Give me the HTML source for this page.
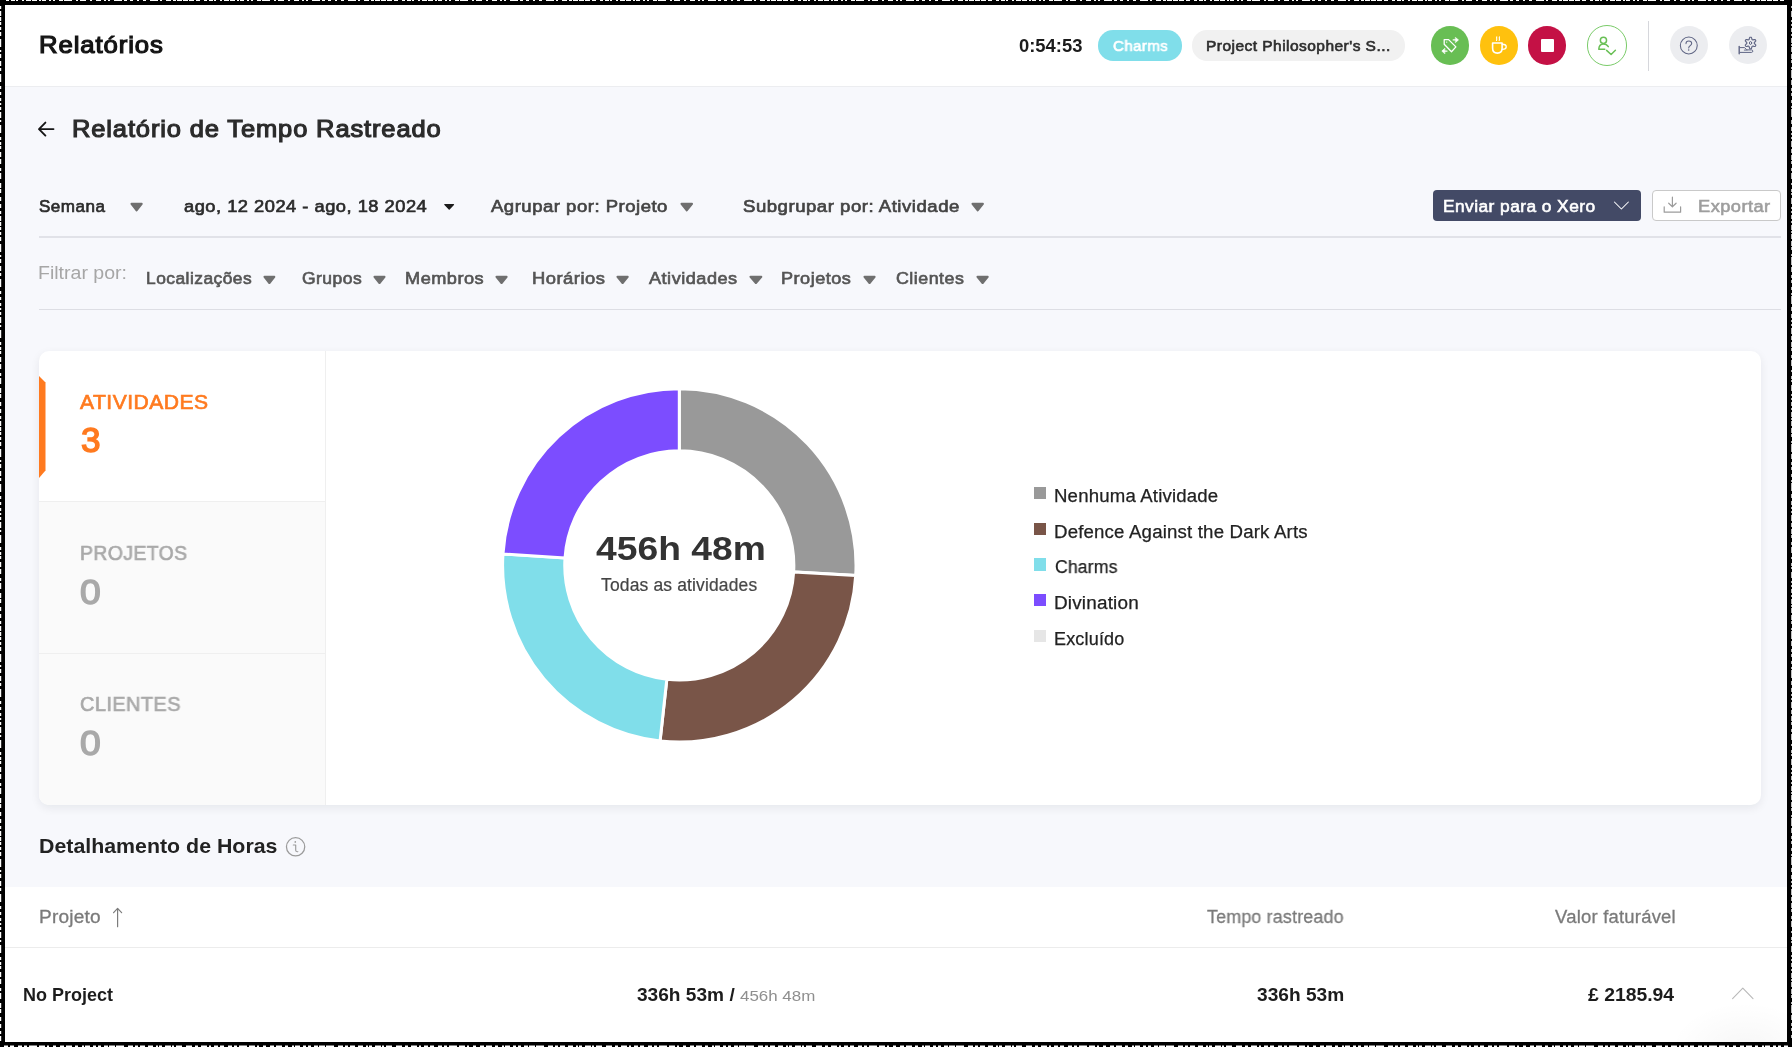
<!DOCTYPE html>
<html lang="pt"><head><meta charset="utf-8"><title>Relatórios</title>
<style>
header,main,section,nav{display:block;position:static;margin:0;padding:0;}
html,body{margin:0;padding:0;background:#000;}
body{width:1792px;height:1047px;position:relative;overflow:hidden;font-family:"Liberation Sans",sans-serif;}
#app{position:absolute;left:0;top:0;width:1792px;height:1047px;background:#F7F8FC;overflow:hidden;}
.a{position:absolute;display:block;}
.t{position:absolute;white-space:nowrap;font-family:"Liberation Sans",sans-serif;transform-origin:0 50%;will-change:transform;}
.fr{position:absolute;background:#000;z-index:50;}
</style></head><body><div id="app">

<header>
<div class="a" style="left:0;top:0;width:1792px;height:85.7px;background:#fff;border-bottom:1.5px solid #ECEDF0"></div>
<div class="a" style="left:1098px;top:30.4px;width:84.3px;height:30.2px;border-radius:15.1px;background:#80DEEA"></div>
<div class="a" style="left:1192.2px;top:30.4px;width:212.8px;height:30.2px;border-radius:15.1px;background:#F1F1F1"></div>
<div class="a" style="left:1430.6px;top:26.1px;width:38.5px;height:38.7px;border-radius:50%;background:#68BE54"></div>
<div class="a" style="left:1479.5px;top:26.1px;width:38.5px;height:38.7px;border-radius:50%;background:#FFC10E"></div>
<div class="a" style="left:1527.7px;top:26.1px;width:38.5px;height:38.7px;border-radius:50%;background:#C41145"></div>
<div class="a" style="left:1540.6px;top:39.1px;width:13px;height:12.8px;background:#fff;border-radius:1px"></div>
<div class="a" style="left:1586.5px;top:24.9px;width:38.8px;height:38.8px;border-radius:50%;border:1px solid #7ACB69;background:#fff"></div>
<div class="a" style="left:1648px;top:20.5px;width:1px;height:50.5px;background:#D6D7DC"></div>
<div class="a" style="left:1669.8px;top:26.2px;width:38.3px;height:38.3px;border-radius:50%;background:#ECEDF0"></div>
<div class="a" style="left:1728.8px;top:26.2px;width:38.3px;height:38.3px;border-radius:50%;background:#ECEDF0"></div>
<svg class="a" style="left:1430px;top:26px" width="40" height="40" viewBox="0 0 40 40" fill="none" stroke="#fff" stroke-width="1.3" stroke-linejoin="round" stroke-linecap="round">
<path d="M14.2 13.6 L18.6 13.6 L25.9 20.9 L21.5 25.7 L14.2 18.2 Z"/><circle cx="16.7" cy="16.1" r="0.7" fill="#fff" stroke="none"/>
<path d="M23.2 13.9 H27"/><path d="M25.6 11.6 L28.5 13.9 L25.6 16.5 Z" fill="#fff" stroke-width="0.6"/>
<path d="M17 25.1 H13.2"/><path d="M14.6 22.5 L11.8 25.1 L14.6 27.6 Z" fill="#fff" stroke-width="0.6"/></svg>
<svg class="a" style="left:1479px;top:26px" width="40" height="40" viewBox="0 0 40 40" fill="none" stroke="#fff" stroke-width="1.6" stroke-linejoin="round" stroke-linecap="round">
<path d="M13.6 17 H23.1 V22 C23.1 25.4 21 27.1 18.35 27.1 C15.7 27.1 13.6 25.4 13.6 22 Z"/>
<path d="M23.3 18.3 A3.9 2.55 0 0 1 23.3 23.4" stroke-width="1.4"/>
<path d="M17.8 10.9 c-0.7 1.1 0.5 2.3 -0.3 3.6 M20.5 10.9 c-0.7 1.1 0.5 2.3 -0.3 3.6" stroke-width="1.1"/></svg>
<svg class="a" style="left:1586px;top:24px" width="42" height="42" viewBox="0 0 42 42" fill="none" stroke="#69BF55" stroke-width="1.5" stroke-linejoin="round" stroke-linecap="round">
<circle cx="17.45" cy="16.3" r="3.1"/>
<path d="M22.3 22.6 C21.2 20.9 19.5 19.9 17.45 19.9 C14.6 19.9 12.9 22 12.8 25.2 H18.8"/>
<path d="M20.6 26.4 L25.1 30.5 L29.4 26.3"/></svg>
<svg class="a" style="left:1668px;top:24px" width="42" height="42" viewBox="0 0 42 42" fill="none" stroke="#5F6584" stroke-width="1.05" stroke-linecap="round" stroke-linejoin="round">
<circle cx="20.8" cy="21.5" r="8.45"/>
<path d="M18 19.6 C18 17.9 19.2 16.9 20.8 16.9 C22.5 16.9 23.7 17.9 23.7 19.4 C23.7 21.4 20.7 21.9 20.7 23.9"/><circle cx="20.7" cy="25.9" r="0.75" fill="#5A6080" stroke="none"/></svg>
<svg class="a" style="left:1727px;top:24px" width="42" height="42" viewBox="0 0 42 42" fill="none" stroke="#5F6584" stroke-width="1.0" stroke-linecap="round" stroke-linejoin="round">
<path d="M23.55 13.25 L24.30 13.30 L24.78 14.41 L24.99 15.54 L25.43 15.75 L25.83 16.02 L26.91 15.64 L28.11 15.50 L28.53 16.12 L28.86 16.80 L28.14 17.77 L27.27 18.51 L27.30 19.00 L27.27 19.49 L28.14 20.23 L28.86 21.20 L28.53 21.88 L28.11 22.50 L26.91 22.36 L25.83 21.98 L25.43 22.25 L24.99 22.46 L24.78 23.59 L24.30 24.70 L23.55 24.75 L22.80 24.70 L22.32 23.59 L22.11 22.46 L21.68 22.25 L21.27 21.98 L20.19 22.36 L18.99 22.50 L18.57 21.88 L18.24 21.20 L18.96 20.23 L19.83 19.49 L19.80 19.00 L19.83 18.51 L18.96 17.77 L18.24 16.80 L18.57 16.12 L18.99 15.50 L20.19 15.64 L21.27 16.02 L21.67 15.75 L22.11 15.54 L22.32 14.41 L22.80 13.30 Z" stroke-width="1.1" fill="#ECEDF0"/>
<ellipse cx="23.55" cy="19.0" rx="1.1" ry="1.5"/>
<path d="M12.2 22.4 V29.8" stroke-width="1.4"/>
<path d="M12.9 23.6 H17.6 L19.7 25.9 H24.6 C26.2 25.9 26.2 28.4 24.6 28.4 H12.9"/><path d="M17.3 26.1 H20" stroke-width="0.9"/></svg>
<div class="t" style="left:38.82px;top:31.00px;font-size:23.8px;line-height:27px;font-weight:400;color:#141414;letter-spacing:0.840px;transform:scaleX(1.0799);-webkit-text-stroke:1.2px #141414;">Relatórios</div>
<div class="t" style="left:1018.80px;top:35.00px;font-size:18.4px;line-height:21px;font-weight:700;color:#1c1c1c;letter-spacing:-0.000px;transform:scaleX(1.0006);">0:54:53</div>
<div class="t" style="left:1112.83px;top:37.00px;font-size:15.5px;line-height:17px;font-weight:400;color:#ffffff;letter-spacing:0.455px;transform:scaleX(0.9680);-webkit-text-stroke:0.65px #ffffff;">Charms</div>
<div class="t" style="left:1206.02px;top:37.00px;font-size:15.5px;line-height:17px;font-weight:400;color:#2e2e2e;letter-spacing:0.455px;transform:scaleX(1.0012);-webkit-text-stroke:0.65px #2e2e2e;">Project Philosopher's S...</div>
</header>
<main>
<section class="titlebar">
<svg class="a" style="left:36px;top:119px" width="22" height="20" viewBox="0 0 22 20" fill="none" stroke="#161616" stroke-width="1.9" stroke-linecap="round" stroke-linejoin="round"><path d="M17.5 10.1 H3.2 M9.4 3.6 L3 10.1 L9.4 16.6"/></svg>
<div class="t" style="left:71.60px;top:115.00px;font-size:23.8px;line-height:27px;font-weight:400;color:#2b2b2b;letter-spacing:0.805px;transform:scaleX(1.0715);-webkit-text-stroke:1.15px #2b2b2b;">Relatório de Tempo Rastreado</div>
</section>
<section class="toolbar">
<svg class="a" style="left:129.30px;top:201.70px" width="15.20" height="10.20" viewBox="-1 -1 15.20 10.20"><path d="M1.5 0.8999999999999999 L11.699999999999989 0.8999999999999999 L6.599999999999994 7.450000000000017 Z" fill="#6f6f6f" stroke="#6f6f6f" stroke-width="2.0999999999999996" stroke-linejoin="round"/></svg>
<svg class="a" style="left:442.50px;top:202.90px" width="12.40" height="7.60" viewBox="-1 -1 12.40 7.60"><path d="M0.9 0.54 L9.499999999999977 0.54 L5.199999999999989 5.149999999999994 Z" fill="#1c1c1c" stroke="#1c1c1c" stroke-width="1.26" stroke-linejoin="round"/></svg>
<svg class="a" style="left:678.60px;top:201.70px" width="15.50" height="10.20" viewBox="-1 -1 15.50 10.20"><path d="M1.5 0.8999999999999999 L12.0 0.8999999999999999 L6.75 7.450000000000017 Z" fill="#6f6f6f" stroke="#6f6f6f" stroke-width="2.0999999999999996" stroke-linejoin="round"/></svg>
<svg class="a" style="left:970.00px;top:201.70px" width="15.40" height="10.20" viewBox="-1 -1 15.40 10.20"><path d="M1.5 0.8999999999999999 L11.899999999999977 0.8999999999999999 L6.699999999999989 7.450000000000017 Z" fill="#6f6f6f" stroke="#6f6f6f" stroke-width="2.0999999999999996" stroke-linejoin="round"/></svg>
<div class="a" style="left:39px;top:236px;width:1742px;height:2px;background:#E1E2E8"></div>
<div class="a" style="left:1433px;top:190px;width:208.3px;height:31px;border-radius:4px;background:#434A66"></div>
<svg class="a" style="left:1612px;top:199px" width="20" height="14" viewBox="0 0 20 14" fill="none" stroke="#fff" stroke-width="1.05" stroke-linecap="round" stroke-linejoin="round"><path d="M2.4 3 L9.4 10 L16.4 3"/></svg>
<div class="a" style="left:1652px;top:190px;width:127px;height:29px;border-radius:4px;background:#fff;border:1px solid #C9C9C9"></div>
<svg class="a" style="left:1662px;top:195px" width="22" height="20" viewBox="0 0 22 20" fill="none" stroke="#9c9c9c" stroke-width="1.2" stroke-linecap="round" stroke-linejoin="round"><path d="M10.4 2.2 V11.6 M6.7 8.2 L10.4 11.8 L14.1 8.2 M2.2 11.8 V17.2 H18.6 V11.8"/></svg>
<div class="t" style="left:39.33px;top:197.00px;font-size:16.6px;line-height:19px;font-weight:400;color:#2b2b2b;letter-spacing:0.455px;transform:scaleX(1.0280);-webkit-text-stroke:0.65px #2b2b2b;">Semana</div>
<div class="t" style="left:183.52px;top:197.00px;font-size:16.6px;line-height:19px;font-weight:400;color:#2b2b2b;letter-spacing:0.455px;transform:scaleX(1.1015);-webkit-text-stroke:0.65px #2b2b2b;">ago, 12 2024 - ago, 18 2024</div>
<div class="t" style="left:491.22px;top:197.00px;font-size:16.6px;line-height:19px;font-weight:400;color:#444;letter-spacing:0.455px;transform:scaleX(1.1161);-webkit-text-stroke:0.65px #444;">Agrupar por: Projeto</div>
<div class="t" style="left:742.93px;top:197.00px;font-size:16.6px;line-height:19px;font-weight:400;color:#444;letter-spacing:0.455px;transform:scaleX(1.1202);-webkit-text-stroke:0.65px #444;">Subgrupar por: Atividade</div>
<div class="t" style="left:1443.08px;top:197.00px;font-size:17px;line-height:19px;font-weight:400;color:#ffffff;letter-spacing:0.420px;transform:scaleX(1.0215);-webkit-text-stroke:0.6px #ffffff;">Enviar para o Xero</div>
<div class="t" style="left:1697.83px;top:197.00px;font-size:17px;line-height:19px;font-weight:400;color:#9e9e9e;letter-spacing:0.420px;transform:scaleX(1.0747);-webkit-text-stroke:0.6px #9e9e9e;">Exportar</div>
</section>
<nav class="filters">
<svg class="a" style="left:262.30px;top:274.50px" width="14.80" height="9.90" viewBox="-1 -1 14.80 9.90"><path d="M1.5 0.8999999999999999 L11.300000000000011 0.8999999999999999 L6.400000000000006 7.149999999999977 Z" fill="#6f6f6f" stroke="#6f6f6f" stroke-width="2.0999999999999996" stroke-linejoin="round"/></svg>
<svg class="a" style="left:372.00px;top:274.50px" width="15.00" height="9.90" viewBox="-1 -1 15.00 9.90"><path d="M1.5 0.8999999999999999 L11.5 0.8999999999999999 L6.5 7.149999999999977 Z" fill="#6f6f6f" stroke="#6f6f6f" stroke-width="2.0999999999999996" stroke-linejoin="round"/></svg>
<svg class="a" style="left:494.20px;top:274.50px" width="15.10" height="9.90" viewBox="-1 -1 15.10 9.90"><path d="M1.5 0.8999999999999999 L11.600000000000023 0.8999999999999999 L6.550000000000011 7.149999999999977 Z" fill="#6f6f6f" stroke="#6f6f6f" stroke-width="2.0999999999999996" stroke-linejoin="round"/></svg>
<svg class="a" style="left:615.40px;top:274.50px" width="15.20" height="9.90" viewBox="-1 -1 15.20 9.90"><path d="M1.5 0.8999999999999999 L11.700000000000045 0.8999999999999999 L6.600000000000023 7.149999999999977 Z" fill="#6f6f6f" stroke="#6f6f6f" stroke-width="2.0999999999999996" stroke-linejoin="round"/></svg>
<svg class="a" style="left:748.30px;top:274.50px" width="15.80" height="9.90" viewBox="-1 -1 15.80 9.90"><path d="M1.5 0.8999999999999999 L12.300000000000068 0.8999999999999999 L6.900000000000034 7.149999999999977 Z" fill="#6f6f6f" stroke="#6f6f6f" stroke-width="2.0999999999999996" stroke-linejoin="round"/></svg>
<svg class="a" style="left:861.90px;top:274.50px" width="15.10" height="9.90" viewBox="-1 -1 15.10 9.90"><path d="M1.5 0.8999999999999999 L11.600000000000023 0.8999999999999999 L6.550000000000011 7.149999999999977 Z" fill="#6f6f6f" stroke="#6f6f6f" stroke-width="2.0999999999999996" stroke-linejoin="round"/></svg>
<svg class="a" style="left:974.50px;top:274.50px" width="15.20" height="9.90" viewBox="-1 -1 15.20 9.90"><path d="M1.5 0.8999999999999999 L11.700000000000045 0.8999999999999999 L6.600000000000023 7.149999999999977 Z" fill="#6f6f6f" stroke="#6f6f6f" stroke-width="2.0999999999999996" stroke-linejoin="round"/></svg>
<div class="a" style="left:39px;top:308.6px;width:1742px;height:1.5px;background:#DDDEE4"></div>
<div class="t" style="left:38.43px;top:262.00px;font-size:18.3px;line-height:21px;font-weight:400;color:#a6a6a6;letter-spacing:0.000px;transform:scaleX(1.0687);">Filtrar por:</div>
<div class="t" style="left:146.28px;top:269.00px;font-size:16.6px;line-height:19px;font-weight:400;color:#555;letter-spacing:0.455px;transform:scaleX(1.0465);-webkit-text-stroke:0.65px #555;">Localizações</div>
<div class="t" style="left:301.62px;top:269.00px;font-size:16.6px;line-height:19px;font-weight:400;color:#555;letter-spacing:0.455px;transform:scaleX(1.0527);-webkit-text-stroke:0.65px #555;">Grupos</div>
<div class="t" style="left:404.83px;top:269.00px;font-size:16.6px;line-height:19px;font-weight:400;color:#555;letter-spacing:0.455px;transform:scaleX(1.0947);-webkit-text-stroke:0.65px #555;">Membros</div>
<div class="t" style="left:531.52px;top:269.00px;font-size:16.6px;line-height:19px;font-weight:400;color:#555;letter-spacing:0.455px;transform:scaleX(1.1063);-webkit-text-stroke:0.65px #555;">Horários</div>
<div class="t" style="left:649.23px;top:269.00px;font-size:16.6px;line-height:19px;font-weight:400;color:#555;letter-spacing:0.455px;transform:scaleX(1.0923);-webkit-text-stroke:0.65px #555;">Atividades</div>
<div class="t" style="left:781.03px;top:269.00px;font-size:16.6px;line-height:19px;font-weight:400;color:#555;letter-spacing:0.455px;transform:scaleX(1.0910);-webkit-text-stroke:0.65px #555;">Projetos</div>
<div class="t" style="left:895.73px;top:269.00px;font-size:16.6px;line-height:19px;font-weight:400;color:#555;letter-spacing:0.455px;transform:scaleX(1.0737);-webkit-text-stroke:0.65px #555;">Clientes</div>
</nav>
<section class="summary">
<div class="a" style="left:39px;top:351px;width:1721.6px;height:453.6px;border-radius:10px;background:#fff;box-shadow:0 3px 10px rgba(20,25,45,0.075);overflow:hidden"><div class="a" style="left:0;top:150px;width:286px;height:304px;background:#FAFAFA"></div><div class="a" style="left:0;top:150px;width:286px;height:1px;background:#EFEFEF"></div><div class="a" style="left:0;top:302px;width:286px;height:1px;background:#EFEFEF"></div><div class="a" style="left:286px;top:0;width:1px;height:454px;background:#EFEFEF"></div><svg class="a" style="left:0;top:24.5px" width="7" height="102" viewBox="0 0 7 102"><path d="M0 0 L6.5 6.5 V94.5 L0 102 Z" fill="#FF7A1F"/></svg></div>
<svg class="a" style="left:0;top:0" width="1792" height="1047" viewBox="0 0 1792 1047"><path d="M679.30 388.70 A176.7 176.7 0 0 1 855.72 575.42 L793.67 571.89 A114.55 114.55 0 0 0 679.30 450.85 Z" fill="#999999" stroke="#fff" stroke-width="3" stroke-linejoin="miter"/><path d="M855.72 575.42 A176.7 176.7 0 0 1 660.06 741.05 L666.83 679.27 A114.55 114.55 0 0 0 793.67 571.89 Z" fill="#795548" stroke="#fff" stroke-width="3" stroke-linejoin="miter"/><path d="M660.06 741.05 A176.7 176.7 0 0 1 502.97 554.00 L564.99 558.01 A114.55 114.55 0 0 0 666.83 679.27 Z" fill="#80DEEA" stroke="#fff" stroke-width="3" stroke-linejoin="miter"/><path d="M502.97 554.00 A176.7 176.7 0 0 1 679.30 388.70 L679.30 450.85 A114.55 114.55 0 0 0 564.99 558.01 Z" fill="#7C4DFF" stroke="#fff" stroke-width="3" stroke-linejoin="miter"/></svg>
<div class="a" style="left:1033.6px;top:486.8px;width:12.4px;height:12.2px;background:#999999"></div>
<div class="a" style="left:1033.6px;top:522.8px;width:12.4px;height:12.2px;background:#795548"></div>
<div class="a" style="left:1033.6px;top:558.4px;width:12.4px;height:12.2px;background:#80DEEA"></div>
<div class="a" style="left:1033.6px;top:594.2px;width:12.4px;height:12.2px;background:#7C4DFF"></div>
<div class="a" style="left:1033.6px;top:630.1px;width:12.4px;height:12.2px;background:#E6E6E6"></div>
<div class="t" style="left:80.12px;top:391.00px;font-size:20px;line-height:22px;font-weight:400;color:#FF7A1F;letter-spacing:0.455px;transform:scaleX(1.0543);-webkit-text-stroke:0.65px #FF7A1F;">ATIVIDADES</div>
<div class="t" style="left:80.95px;top:420.00px;font-size:35px;line-height:39px;font-weight:400;color:#FF7A1F;letter-spacing:0.000px;transform:scaleX(1.0027);-webkit-text-stroke:1.5px #FF7A1F;">3</div>
<div class="t" style="left:79.76px;top:542.00px;font-size:20px;line-height:22px;font-weight:400;color:#A9A9A9;letter-spacing:0.455px;transform:scaleX(0.9679);-webkit-text-stroke:0.65px #A9A9A9;">PROJETOS</div>
<div class="t" style="left:80.09px;top:572.00px;font-size:35px;line-height:39px;font-weight:400;color:#A9A9A9;letter-spacing:0.000px;transform:scaleX(1.0637);-webkit-text-stroke:1.5px #A9A9A9;">0</div>
<div class="t" style="left:79.73px;top:693.00px;font-size:20px;line-height:22px;font-weight:400;color:#A9A9A9;letter-spacing:0.455px;transform:scaleX(0.9942);-webkit-text-stroke:0.65px #A9A9A9;">CLIENTES</div>
<div class="t" style="left:80.09px;top:723.00px;font-size:35px;line-height:39px;font-weight:400;color:#A9A9A9;letter-spacing:0.000px;transform:scaleX(1.0637);-webkit-text-stroke:1.5px #A9A9A9;">0</div>
<div class="t" style="left:595.50px;top:529.00px;font-size:33.8px;line-height:38px;font-weight:700;color:#333;letter-spacing:-0.000px;transform:scaleX(1.1018);">456h 48m</div>
<div class="t" style="left:601.10px;top:575.00px;font-size:17.5px;line-height:20px;font-weight:400;color:#444;letter-spacing:0.140px;transform:scaleX(0.9994);-webkit-text-stroke:0.2px #444;">Todas as atividades</div>
<div class="t" style="left:1053.99px;top:486.00px;font-size:18px;line-height:20px;font-weight:400;color:#222;letter-spacing:0.175px;transform:scaleX(1.0334);-webkit-text-stroke:0.25px #222;">Nenhuma Atividade</div>
<div class="t" style="left:1053.99px;top:522.00px;font-size:18px;line-height:20px;font-weight:400;color:#222;letter-spacing:0.175px;transform:scaleX(1.0350);-webkit-text-stroke:0.25px #222;">Defence Against the Dark Arts</div>
<div class="t" style="left:1055.03px;top:557.00px;font-size:18px;line-height:20px;font-weight:400;color:#222;letter-spacing:0.175px;transform:scaleX(0.9763);-webkit-text-stroke:0.25px #222;">Charms</div>
<div class="t" style="left:1053.97px;top:593.00px;font-size:18px;line-height:20px;font-weight:400;color:#222;letter-spacing:0.175px;transform:scaleX(1.0504);-webkit-text-stroke:0.25px #222;">Divination</div>
<div class="t" style="left:1054.03px;top:629.00px;font-size:18px;line-height:20px;font-weight:400;color:#222;letter-spacing:0.175px;transform:scaleX(0.9930);-webkit-text-stroke:0.25px #222;">Excluído</div>
</section>
<section class="details">
<svg class="a" style="left:284px;top:834.6px" width="24" height="24" viewBox="0 0 24 24" fill="none" stroke="#9b9b9b" stroke-width="1.25" stroke-linecap="round" stroke-linejoin="round"><circle cx="11.6" cy="11.8" r="9.15"/><path d="M9.3 10 H11.7 V15 C11.7 16.3 12.4 16.9 13.8 16.7" stroke-width="1.15"/><circle cx="11.3" cy="6.9" r="0.85" fill="#9b9b9b" stroke="none"/></svg>
<div class="a" style="left:0;top:886.7px;width:1792px;height:170px;background:#fff"></div>
<div class="a" style="left:0;top:947px;width:1792px;height:1px;background:#ECECEC"></div>
<div class="a" style="left:1640px;top:990px;width:160px;height:60px;background:radial-gradient(ellipse 75px 50px at 105px 62px, rgba(0,0,0,0.035), rgba(0,0,0,0) 100%)"></div>
<svg class="a" style="left:108px;top:904px" width="20" height="26" viewBox="0 0 20 26" fill="none" stroke="#7c7c7c" stroke-width="1.2" stroke-linecap="round" stroke-linejoin="round"><path d="M9.6 22.7 V4.6 M5.6 8.7 L9.6 4.4 L13.6 8.7"/></svg>
<svg class="a" style="left:1730px;top:984px" width="26" height="18" viewBox="0 0 26 18" fill="none" stroke="#b9b9b9" stroke-width="1.1" stroke-linecap="round" stroke-linejoin="round"><path d="M2.6 14.6 L12.8 4.2 L23 14.6"/></svg>
<div class="t" style="left:39.16px;top:834.00px;font-size:20.5px;line-height:23px;font-weight:700;color:#222;letter-spacing:-0.000px;transform:scaleX(1.0414);">Detalhamento de Horas</div>
<div class="t" style="left:38.79px;top:907.00px;font-size:18px;line-height:20px;font-weight:400;color:#7a7a7a;letter-spacing:0.210px;transform:scaleX(1.0585);-webkit-text-stroke:0.3px #7a7a7a;">Projeto</div>
<div class="t" style="left:1206.75px;top:907.00px;font-size:18px;line-height:20px;font-weight:400;color:#7a7a7a;letter-spacing:0.210px;transform:scaleX(0.9894);-webkit-text-stroke:0.3px #7a7a7a;">Tempo rastreado</div>
<div class="t" style="left:1554.85px;top:907.00px;font-size:18px;line-height:20px;font-weight:400;color:#7a7a7a;letter-spacing:0.210px;transform:scaleX(1.0255);-webkit-text-stroke:0.3px #7a7a7a;">Valor faturável</div>
<div class="t" style="left:23.30px;top:985.00px;font-size:18px;line-height:20px;font-weight:700;color:#1c1c1c;letter-spacing:0.000px;transform:scaleX(0.9962);">No Project</div>
<div class="t" style="left:636.80px;top:985.00px;font-size:18px;line-height:20px;font-weight:700;color:#1c1c1c;letter-spacing:0.000px;transform:scaleX(1.0612);">336h 53m /</div>
<div class="t" style="left:740.00px;top:987.00px;font-size:15.5px;line-height:17px;font-weight:400;color:#8f8f8f;letter-spacing:0.000px;transform:scaleX(1.0920);">456h 48m</div>
<div class="t" style="left:1256.80px;top:985.00px;font-size:18px;line-height:20px;font-weight:700;color:#1c1c1c;letter-spacing:0.000px;transform:scaleX(1.0622);">336h 53m</div>
<div class="t" style="left:1588.10px;top:985.00px;font-size:18px;line-height:20px;font-weight:700;color:#1c1c1c;letter-spacing:0.000px;transform:scaleX(1.0753);">£ 2185.94</div>
</section>
</main>
<div class="fr" style="left:0;top:0;width:1792px;height:5px"></div>
<div class="fr" style="left:0;top:1042px;width:1792px;height:5px"></div>
<div class="fr" style="left:0;top:0;width:5px;height:1047px"></div>
<div class="fr" style="left:1787px;top:0;width:5px;height:1047px"></div>
<svg class="a" style="left:0;top:0;z-index:60" width="1792" height="1047" viewBox="0 0 1792 1047" fill="none" stroke="#fff"><path d="M6 0.55 H1786" stroke-width="1.1" stroke-dasharray="3 2 4 1 2 4 2 2 5 1 5 2 2 1 4 3 2 2 2 4 4 1 8 4 2 2 6 4 2 4 5 3 2 2 2 4 8 2 3 3 3 4 2 4 3 4 8 2 2 4 5 2 3 1 5 1 5 1 5 2 4 4"/><path d="M4 1046.25 H1788" stroke-width="1.5" stroke-dasharray="4 2 4 4 4 2 3 2 8 2 6 2 2 4 3 4 4 2 6 3 3 4 2 1 5 3 3 2 3 3 4 1 6 1 8 4 5 2 3 2 5 3 5 3 2 1 3 3 6 1 2 2 6 4 6 3 3 3 6 2 2 3"/><path d="M0.6 6 V1041" stroke-width="1.2" stroke-dasharray="3 2 5 1 4 1 3 2 3 2 4 3 8 3 2 2 4 3 5 2 3 3 8 4 3 3 3 3 3 2 2 2 3 2 6 2 2 3 8 4 3 2 3 1 3 3 5 2 5 4 3 2 6 4 5 1 4 4 4 3 4 3"/><path d="M1791.55 6 V1041" stroke-width="0.8" stroke-dasharray="2 3 6 3 2 2 2 2 4 2 2 2 5 1 2 1 5 2 5 1 3 4 2 1 8 2 5 3 3 2 3 4 3 3 2 1 8 3 4 3 4 2 2 2 2 2 6 2 4 2 5 1 3 4 3 2 6 4 2 4 3 1"/></svg>
</div></body></html>
